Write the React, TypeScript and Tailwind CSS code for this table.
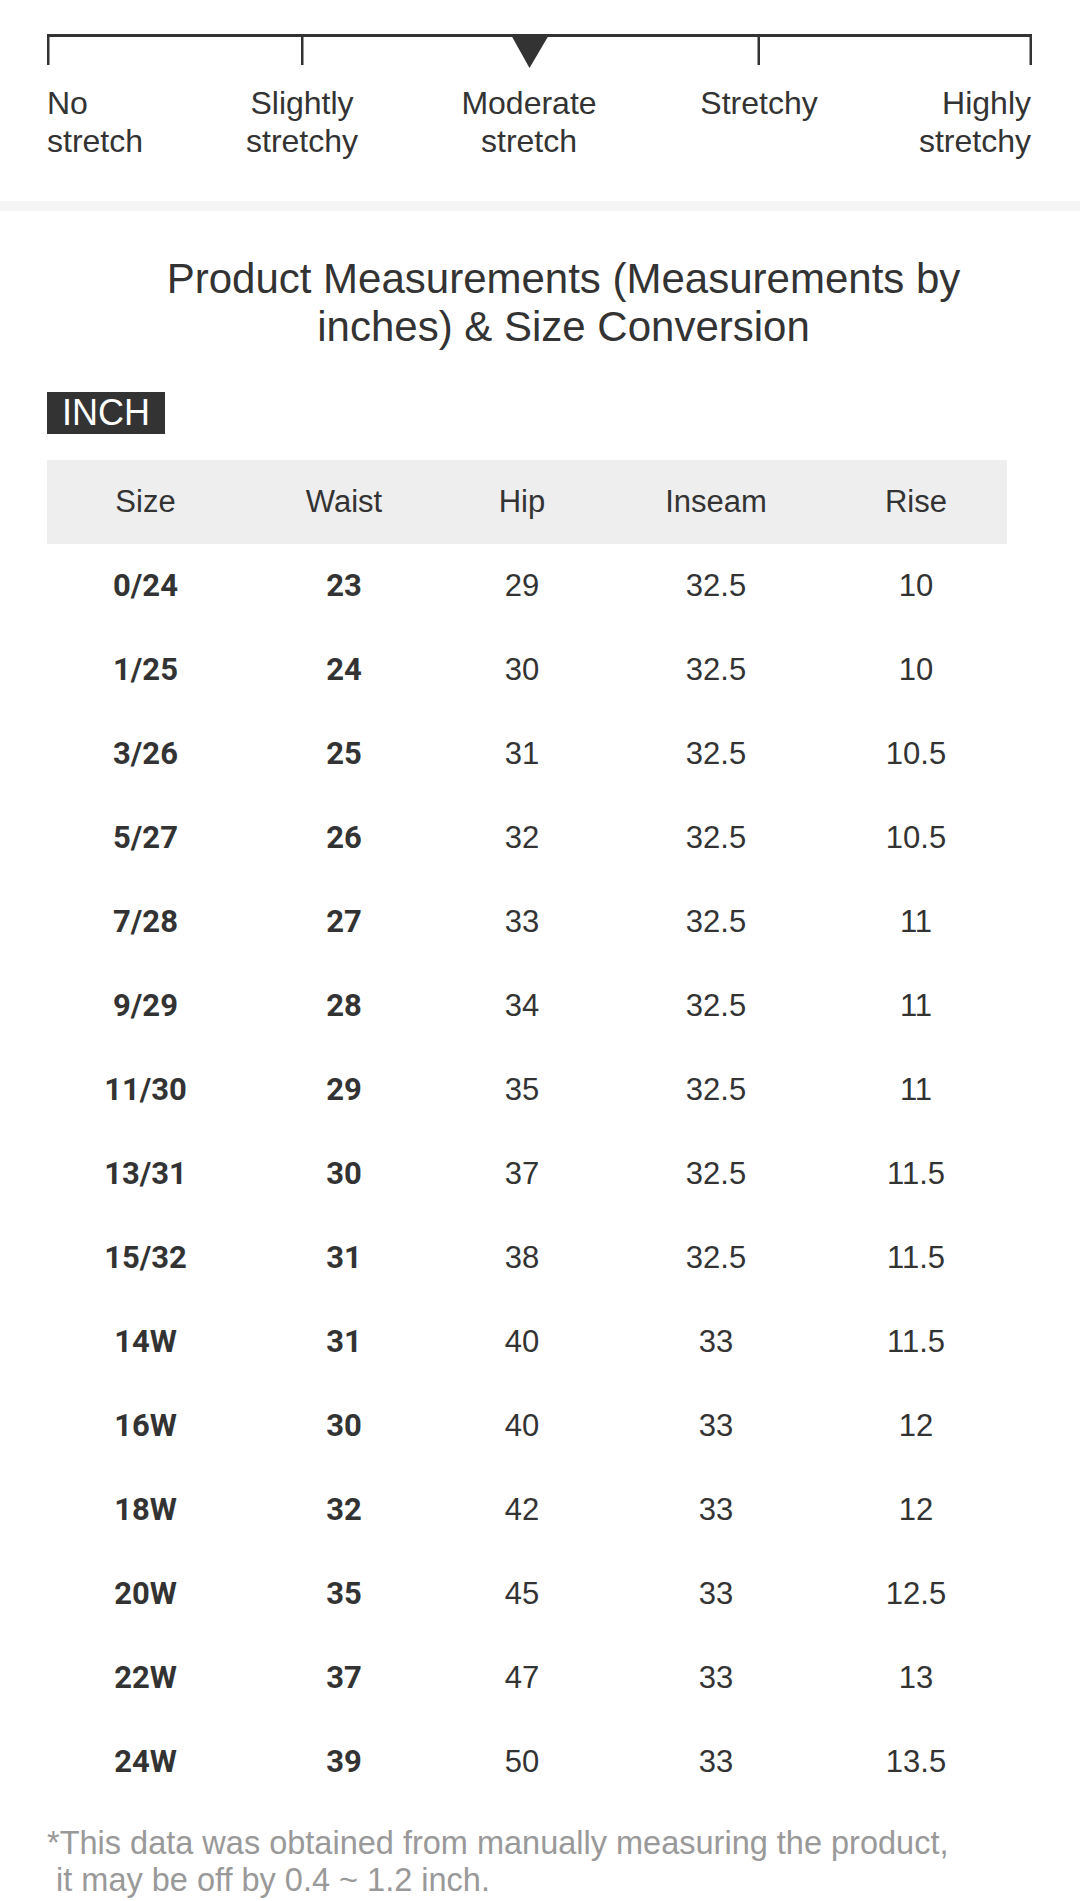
const rows: [string, string, string, string, string][] = [
  ['0/24', '23', '29', '32.5', '10'],
  ['1/25', '24', '30', '32.5', '10'],
  ['3/26', '25', '31', '32.5', '10.5'],
  ['5/27', '26', '32', '32.5', '10.5'],
  ['7/28', '27', '33', '32.5', '11'],
  ['9/29', '28', '34', '32.5', '11'],
  ['11/30', '29', '35', '32.5', '11'],
  ['13/31', '30', '37', '32.5', '11.5'],
  ['15/32', '31', '38', '32.5', '11.5'],
  ['14W', '31', '40', '33', '11.5'],
  ['16W', '30', '40', '33', '12'],
  ['18W', '32', '42', '33', '12'],
  ['20W', '35', '45', '33', '12.5'],
  ['22W', '37', '47', '33', '13'],
  ['24W', '39', '50', '33', '13.5'],
];

const headers = ['Size', 'Waist', 'Hip', 'Inseam', 'Rise'];

function StretchScale() {
  return (
    <div className="pl-[47px] pt-[33px]">
      {/* scale bar with ticks and the pointer */}
      <svg width="986" height="36" viewBox="0 0 986 36" className="block">
        <rect x="0" y="1" width="985" height="3" fill="#333" />
        <rect x="0" y="1" width="2.5" height="31" fill="#333" />
        <rect x="254" y="1" width="2.5" height="31" fill="#333" />
        <rect x="710.5" y="1" width="2.5" height="31" fill="#333" />
        <rect x="982.5" y="1" width="2.5" height="31" fill="#333" />
        <polygon points="463.5,1 502.5,1 482.5,35" fill="#333" />
      </svg>

      <div className="mt-[15px] grid w-[984px] grid-cols-[160px_190px_264px_196px_174px] text-[32px] leading-[38px] text-[#333]">
        <div className="text-left">No<br />stretch</div>
        <div className="text-center">Slightly<br />stretchy</div>
        <div className="text-center">Moderate<br />stretch</div>
        <div className="text-center">Stretchy</div>
        <div className="text-right">Highly<br />stretchy</div>
      </div>
    </div>
  );
}

export default function App() {
  return (
    <div className="min-h-[1901px] w-[1080px] bg-white" style={{ fontFamily: '"Liberation Sans", Arial, sans-serif' }}>
      <StretchScale />

      <div className="mt-[41px] h-[10px] bg-[#f5f5f5]"></div>

      <div className="pl-[47px]">
        <h2 className="mt-[44px] px-[60px] text-center text-[42px] leading-[48px] font-normal text-[#333]">
          Product Measurements (Measurements by inches) &amp; Size Conversion
        </h2>

        <div className="mt-[41px] inline-block bg-[#333] px-[15px] text-[36px] leading-[42px] text-white">INCH</div>

        <div className="mt-[26px] w-[960px] text-[31px] text-[#333]">
          <div className="grid h-[84px] grid-cols-[197px_200px_156px_232px_168px] items-center bg-[#eeeeee] pr-[7px] text-center">
            {headers.map((h) => (
              <div key={h}>{h}</div>
            ))}
          </div>
          {rows.map((r) => (
            <div key={r[0]} className="grid h-[84px] grid-cols-[197px_200px_156px_232px_168px] items-center pr-[7px] text-center">
              <div className="font-bold" style={{ fontFamily: 'Roboto, sans-serif' }}>{r[0]}</div>
              <div className="font-bold" style={{ fontFamily: 'Roboto, sans-serif' }}>{r[1]}</div>
              <div>{r[2]}</div>
              <div>{r[3]}</div>
              <div>{r[4]}</div>
            </div>
          ))}
        </div>

        <p className="mt-[21px] text-[32.5px] leading-[37px] text-[#999]">
          *This data was obtained from manually measuring the product,
          <br />
          &nbsp;it may be off by 0.4 ~ 1.2 inch.
        </p>
      </div>
    </div>
  );
}
